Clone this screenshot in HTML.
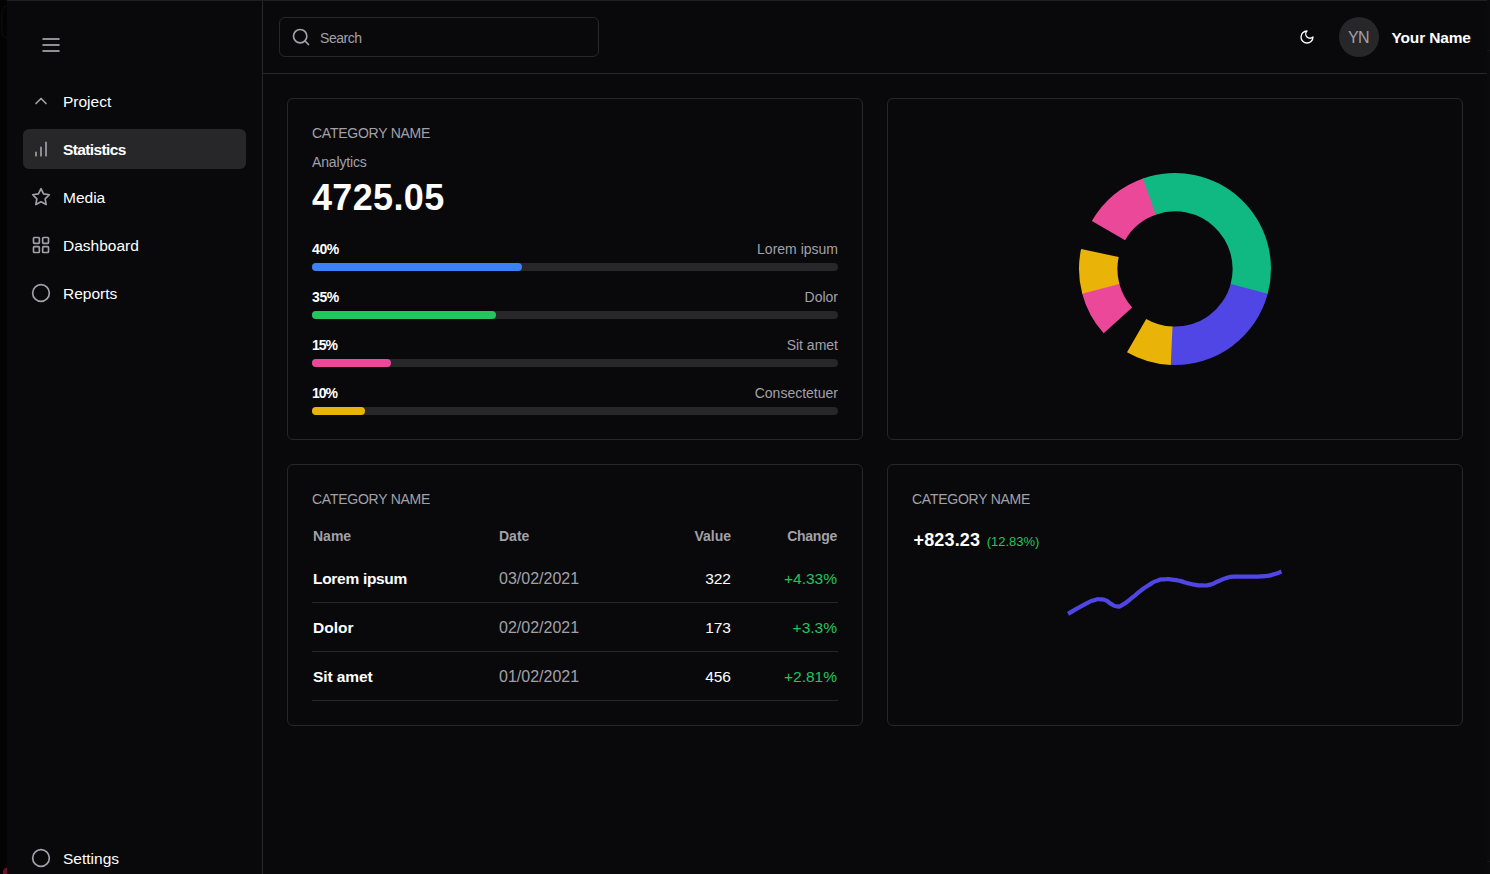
<!DOCTYPE html>
<html>
<head>
<meta charset="utf-8">
<style>
*{box-sizing:border-box;margin:0;padding:0}
html,body{width:1490px;height:874px;overflow:hidden;background:#030303;font-family:"Liberation Sans",sans-serif;color:#fff}
#win{position:absolute;left:7px;top:0;width:1480px;height:874px;background:#09090b;border-top:1px solid #1f1f1f}
#rstrip{position:absolute;left:1487px;top:0;width:3px;height:874px;background:#0b0b0d}
#side{position:absolute;left:0;top:0;width:256px;height:873px;border-right:1px solid #27272a}
#top{position:absolute;left:256px;top:0;width:1224px;height:73px;border-bottom:1px solid #27272a}
.abs{position:absolute}
.nav{position:absolute;left:16px;width:223px;height:40px;border-radius:6px;font-size:15.5px;color:#fff}
.nav .lbl{position:absolute;left:40px;top:1px;line-height:40px;white-space:nowrap}
.nav svg{position:absolute;left:8px;top:10px;width:20px;height:20px;fill:none;stroke:#a1a1aa;stroke-width:2;stroke-linecap:round;stroke-linejoin:round}
.nav.act{background:#27272a}
.nav.act .lbl{font-weight:bold;letter-spacing:-.62px}
#search{position:absolute;left:16px;top:16px;width:320px;height:40px;border:1px solid #27272a;border-radius:6px}
.card{position:absolute;border:1px solid #27272a;border-radius:6px;background:#09090b}
.cat{position:absolute;left:24px;top:24px;font-size:14px;letter-spacing:-.25px;color:#a1a1aa;line-height:20px;white-space:nowrap}
.bar{position:absolute;left:24px;width:526px;height:8px;border-radius:4px;background:#27272a}
.bar i{position:absolute;left:0;top:0;height:8px;border-radius:4px;display:block}
.pct{position:absolute;left:24px;font-size:14px;letter-spacing:-.35px;font-weight:bold;color:#fff;line-height:16px}
.plb{position:absolute;right:24px;font-size:14px;color:#a1a1aa;line-height:16px;white-space:nowrap}
.th{position:absolute;font-size:14px;font-weight:bold;color:#a1a1aa;line-height:20px;white-space:nowrap;margin-top:-1px}
.td{position:absolute;font-size:15.5px;line-height:20px;white-space:nowrap}
.r{text-align:right}
.hr{position:absolute;left:24px;width:526px;height:1px;background:#27272a}
</style>
</head>
<body>
<div id="win">
  <div id="side">
    <svg class="abs" style="left:32px;top:32px" width="24" height="24" viewBox="0 0 24 24"><path d="M4 6h16M4 12h16M4 18h16" stroke="#bcbcc8" stroke-width="1.5" stroke-linecap="round" fill="none"/></svg>

    <div class="nav" style="top:80px"><svg viewBox="0 0 24 24"><path d="m18 15-6-6-6 6"/></svg><span class="lbl">Project</span></div>
    <div class="nav act" style="top:128px"><svg viewBox="0 0 24 24"><path d="M12 20V10M18 20V4M6 20v-4"/></svg><span class="lbl">Statistics</span></div>
    <div class="nav" style="top:176px"><svg viewBox="0 0 24 24"><path d="M12 2l3.09 6.260L22 9.270l-5 4.870 1.180 6.880L12 17.770l-6.180 3.250L7 14.140 2 9.270l6.910-1.010z"/></svg><span class="lbl">Media</span></div>
    <div class="nav" style="top:224px"><svg viewBox="0 0 24 24"><rect x="3" y="3" width="7" height="7" rx="1"/><rect x="14" y="3" width="7" height="7" rx="1"/><rect x="3" y="14" width="7" height="7" rx="1"/><rect x="14" y="14" width="7" height="7" rx="1"/></svg><span class="lbl">Dashboard</span></div>
    <div class="nav" style="top:272px"><svg viewBox="0 0 24 24"><circle cx="12" cy="12" r="10"/></svg><span class="lbl">Reports</span></div>
    <div class="nav" style="top:837px"><svg viewBox="0 0 24 24"><circle cx="12" cy="12" r="10"/></svg><span class="lbl">Settings</span></div>
  </div>

  <div id="top">
    <div id="search">
      <svg class="abs" style="left:11px;top:9px" width="20" height="20" viewBox="0 0 24 24" fill="none" stroke="#a1a1aa" stroke-width="2" stroke-linecap="round"><circle cx="11" cy="11" r="8"/><path d="m21 21-4.300-4.300"/></svg>
      <span class="abs" style="left:40px;top:0;line-height:41px;font-size:14px;letter-spacing:-.45px;color:#a1a1aa">Search</span>
    </div>
    <svg class="abs" style="left:1036px;top:28px" width="16" height="16" viewBox="0 0 24 24" fill="none" stroke="#fff" stroke-width="2" stroke-linecap="round" stroke-linejoin="round"><path d="M12 3a6 6 0 0 0 9 9 9 9 0 1 1-9-9Z"/></svg>
    <div class="abs" style="left:1076px;top:16px;width:40px;height:40px;border-radius:20px;background:#27272a;color:#a1a1aa;font-size:16px;line-height:42px;text-align:center;letter-spacing:-.6px;text-indent:-1px">YN</div>
    <span class="abs" style="left:1128.500px;top:17px;line-height:40px;font-size:15.5px;letter-spacing:-.15px;font-weight:bold;color:#fff;white-space:nowrap">Your Name</span>
  </div>

  <!-- card 1 -->
  <div class="card" style="left:280px;top:97px;width:576px;height:342px">
    <div class="cat">CATEGORY NAME</div>
    <div class="abs" style="left:24px;top:53.500px;font-size:14px;letter-spacing:-.15px;line-height:18px;color:#a1a1aa">Analytics</div>
    <div class="abs" style="left:24px;top:74.500px;font-size:36px;letter-spacing:.35px;line-height:48px;font-weight:bold;color:#fff">4725.05</div>

    <div class="pct" style="top:142px">40%</div><div class="plb" style="top:142px">Lorem ipsum</div>
    <div class="bar" style="top:164px"><i style="width:210px;background:#3b82f6"></i></div>
    <div class="pct" style="top:190px">35%</div><div class="plb" style="top:190px">Dolor</div>
    <div class="bar" style="top:212px"><i style="width:184px;background:#22c55e"></i></div>
    <div class="pct" style="top:238px;letter-spacing:-1px">15%</div><div class="plb" style="top:238px">Sit amet</div>
    <div class="bar" style="top:260px"><i style="width:79px;background:#ec4899"></i></div>
    <div class="pct" style="top:286px;letter-spacing:-1px">10%</div><div class="plb" style="top:286px">Consectetuer</div>
    <div class="bar" style="top:308px"><i style="width:53px;background:#eab308"></i></div>
  </div>

  <!-- card 2 -->
  <div class="card" style="left:880px;top:97px;width:576px;height:342px">
    <svg class="abs" style="left:187px;top:70px" width="200" height="200" viewBox="-100 -100 200 200"><path fill="#ec4899" d="M-83.14 -48.00A96 96 0 0 1 -31.25 -90.77L-18.75 -54.46A57.6 57.6 0 0 0 -49.88 -28.80Z"/><path fill="#4f46e5" d="M92.94 24.04A96 96 0 0 1 -5.02 95.87L-3.01 57.52A57.6 57.6 0 0 0 55.77 14.42Z"/><path fill="#eab308" d="M-4.19 95.91A96 96 0 0 1 -48.00 83.14L-28.80 49.88A57.6 57.6 0 0 0 -2.51 57.55Z"/><path fill="#ec4899" d="M-71.34 64.24A96 96 0 0 1 -92.90 24.20L-55.74 14.52A57.6 57.6 0 0 0 -42.81 38.54Z"/><path fill="#eab308" d="M-92.73 24.85A96 96 0 0 1 -93.90 -19.96L-56.34 -11.98A57.6 57.6 0 0 0 -55.64 14.91Z"/><path fill="#10b981" d="M-32.05 -90.49A96 96 0 0 1 92.73 24.85L55.64 14.91A57.6 57.6 0 0 0 -19.23 -54.30Z"/></svg>
  </div>

  <!-- card 3 -->
  <div class="card" style="left:280px;top:463px;width:576px;height:262px">
    <div class="cat">CATEGORY NAME</div>
    <div class="th" style="left:25px;top:62px">Name</div>
    <div class="th" style="left:211px;top:62px">Date</div>
    <div class="th r" style="right:131px;top:62px">Value</div>
    <div class="th r" style="right:25px;top:62px;letter-spacing:-.25px">Change</div>

    <div class="td" style="left:25px;top:104px;font-weight:bold;letter-spacing:-.3px">Lorem ipsum</div>
    <div class="td" style="left:211px;top:104px;color:#a1a1aa;font-size:16px">03/02/2021</div>
    <div class="td r" style="right:131px;top:104px">322</div>
    <div class="td r" style="right:25px;top:104px;color:#22c55e">+4.33%</div>
    <div class="hr" style="top:137px"></div>

    <div class="td" style="left:25px;top:153px;font-weight:bold;letter-spacing:0">Dolor</div>
    <div class="td" style="left:211px;top:153px;color:#a1a1aa;font-size:16px">02/02/2021</div>
    <div class="td r" style="right:131px;top:153px">173</div>
    <div class="td r" style="right:25px;top:153px;color:#22c55e">+3.3%</div>
    <div class="hr" style="top:186px"></div>

    <div class="td" style="left:25px;top:202px;font-weight:bold;letter-spacing:-.08px">Sit amet</div>
    <div class="td" style="left:211px;top:202px;color:#a1a1aa;font-size:16px">01/02/2021</div>
    <div class="td r" style="right:131px;top:202px">456</div>
    <div class="td r" style="right:25px;top:202px;color:#22c55e">+2.81%</div>
    <div class="hr" style="top:235px"></div>
  </div>

  <!-- card 4 -->
  <div class="card" style="left:880px;top:463px;width:576px;height:262px">
    <div class="cat">CATEGORY NAME</div>
    <div class="abs" style="left:25.500px;top:62.500px;font-size:18px;letter-spacing:.15px;line-height:24px;font-weight:bold;white-space:nowrap">+823.23<span style="font-size:13px;letter-spacing:0;font-weight:normal;color:#22c55e;margin-left:6.500px">(12.83%)</span></div>
    <svg class="abs" style="left:0;top:0" width="574" height="260" viewBox="888 465 574 260" fill="none"><path d="M1068.05 613.90C1073.43 610.80 1075.35 609.23 1084.20 604.60C1093.05 599.97 1089.23 601.73 1094.60 600.00C1099.97 598.27 1096.53 599.27 1100.30 599.40C1104.07 599.53 1102.17 598.80 1105.90 600.40C1109.63 602.00 1107.73 602.20 1111.50 604.20C1115.27 606.20 1113.43 606.27 1117.20 606.40C1120.97 606.53 1117.70 607.60 1122.80 604.60C1127.90 601.60 1126.60 601.97 1132.50 597.40C1138.40 592.83 1135.13 594.93 1140.50 590.90C1145.87 586.87 1143.23 588.63 1148.60 585.30C1153.97 581.97 1151.23 582.90 1156.60 580.90C1161.97 578.90 1159.57 579.73 1164.70 579.30C1169.83 578.87 1166.90 579.07 1172.00 579.60C1177.10 580.13 1175.30 579.83 1180.00 580.90C1184.70 581.97 1181.43 581.57 1186.10 582.80C1190.77 584.03 1188.63 583.73 1194.00 584.60C1199.37 585.47 1196.77 585.40 1202.20 585.40C1207.63 585.40 1204.93 586.00 1210.30 584.60C1215.67 583.20 1212.93 583.40 1218.30 581.20C1223.67 579.00 1221.03 579.50 1226.40 578.00C1231.77 576.50 1226.37 577.17 1234.40 576.70C1242.43 576.23 1240.30 576.80 1250.50 576.60C1260.70 576.40 1257.20 576.87 1265.00 576.10C1272.80 575.33 1268.40 575.83 1273.90 574.30C1279.40 572.77 1278.97 572.43 1281.50 571.50" stroke="#4f46e5" stroke-width="4.2" stroke-linejoin="round"/></svg>
  </div>
</div>
<div id="rstrip"><i style="position:absolute;left:0;top:50px;width:3px;height:1px;background:#161618"></i><i style="position:absolute;left:0;top:861px;width:3px;height:1px;background:#161618"></i></div>
<svg class="abs" style="left:0;top:864px" width="8" height="10" viewBox="0 0 8 10"><path d="M3 10V6.5Q4.5 4 7 3.2V10z" fill="#6b1028"/></svg>
<svg class="abs" style="left:0;top:4px" width="7" height="36" viewBox="0 0 7 36" fill="none"><path d="M8 1.5C3 2.5 1.8 6 1.8 10v16c0 4 1.2 7.500 6.2 8.500" stroke="#101012" stroke-width="1"/></svg>
</body>
</html>
